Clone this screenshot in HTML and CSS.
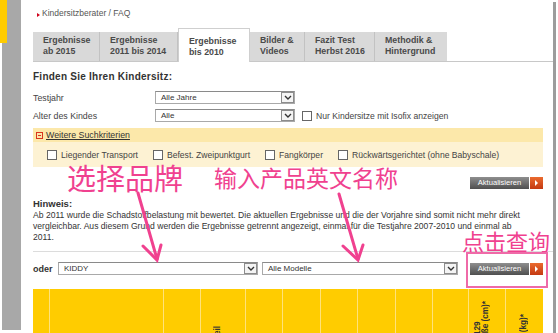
FILE: index.html
```html
<!DOCTYPE html>
<html lang="de">
<head>
    <meta charset="UTF-8">
    <title>Kindersitzberater / FAQ</title>
    <link rel="stylesheet" href="styles.css">
</head>
<body>
<div class="page">
    <div class="sidebar"><div class="sidebar-mark"></div></div>
    <div class="main">
        <div class="crumb"><span class="crumb-arrow"></span>Kindersitzberater / FAQ</div>
        <ul class="tabs">
            <li class="tab t1">Ergebnisse<br>ab 2015</li>
            <li class="tab t2">Ergebnisse<br>2011 bis 2014</li>
            <li class="tab t3 active">Ergebnisse<br>bis 2010</li>
            <li class="tab t4">Bilder &amp;<br>Videos</li>
            <li class="tab t5">Fazit Test<br>Herbst 2016</li>
            <li class="tab t6">Methodik &amp;<br>Hintergrund</li>
        </ul>

        <h2 class="finder-title">Finden Sie Ihren Kindersitz:</h2>

        <div class="form-row">
            <label class="form-label">Testjahr</label>
            <div class="select sel-short"><span>Alle Jahre</span><i class="sel-btn"><svg width="8" height="5" viewBox="0 0 8 5"><path d="M1 1 L4 4 L7 1" fill="none" stroke="#333" stroke-width="1.4"/></svg></i></div>
        </div>
        <div class="form-row second">
            <label class="form-label">Alter des Kindes</label>
            <div class="select sel-short"><span>Alle</span><i class="sel-btn"><svg width="8" height="5" viewBox="0 0 8 5"><path d="M1 1 L4 4 L7 1" fill="none" stroke="#333" stroke-width="1.4"/></svg></i></div>
            <span class="check"><i class="box"></i>Nur Kindersitze mit Isofix anzeigen</span>
        </div>

        <div class="more">
            <div class="more-head"><span class="minus"></span><a class="more-link">Weitere Suchkriterien</a></div>
            <div class="more-body">
                <span class="check"><i class="box"></i>Liegender Transport</span>
                <span class="check"><i class="box"></i>Befest. Zweipunktgurt</span>
                <span class="check"><i class="box"></i>Fangkörper</span>
                <span class="check"><i class="box"></i>Rückwärtsgerichtet (ohne Babyschale)</span>
            </div>
        </div>

        <div class="btn-row">
            <div class="btn"><span class="btn-label">Aktualisieren</span><span class="btn-go"></span></div>
        </div>

        <div class="hint">
            <b>Hinweis:</b>
            <p>Ab 2011 wurde die Schadstoffbelastung mit bewertet. Die aktuellen Ergebnisse und die der Vorjahre sind somit nicht mehr direkt vergleichbar. Aus diesem Grund werden die Ergebnisse getrennt angezeigt, einmal für die Testjahre 2007-2010 und einmal ab 2011.</p>
        </div>

        <div class="sep"></div>

        <div class="oder-row">
            <b class="oder">oder</b>
            <div class="select sel-brand"><span>KIDDY</span><i class="sel-btn"><svg width="8" height="5" viewBox="0 0 8 5"><path d="M1 1 L4 4 L7 1" fill="none" stroke="#333" stroke-width="1.4"/></svg></i></div>
            <div class="select sel-model"><span>Alle Modelle</span><i class="sel-btn"><svg width="8" height="5" viewBox="0 0 8 5"><path d="M1 1 L4 4 L7 1" fill="none" stroke="#333" stroke-width="1.4"/></svg></i></div>
            <div class="btn"><span class="btn-label">Aktualisieren</span><span class="btn-go"></span></div>
        </div>

        <div class="results">
            <div class="col c1"></div>
            <div class="col c2"></div>
            <div class="col c3"></div>
            <div class="col c4"><span class="vtext v-low">Gesamturteil</span></div>
            <div class="col c5"></div>
            <div class="col c6"></div>
            <div class="col c7"></div>
            <div class="col c8"></div>
            <div class="col c9"></div>
            <div class="col c10"></div>
            <div class="col c11"><span class="vtext v-mid">Größe 40-129<br>Körpergröße (cm)*</span></div>
            <div class="col c12"><span class="vtext v-deep">bis 44<br>Gewicht (kg)*</span></div>
        </div>
    </div>
    <div class="rightbar"></div>

    <!-- annotations drawn over the screenshot -->
    <div class="note n1">选择品牌</div>
    <div class="note n2">输入产品英文名称</div>
    <div class="note n3">点击查询</div>
    <div class="note-box"></div>
    <svg class="arrows" width="558" height="333" viewBox="0 0 558 333">
        <g fill="none" stroke="#f0418f" stroke-width="3" stroke-linecap="round">
            <path d="M138 193 L157 259"/>
            <path d="M143 246 L157 260 L161 245"/>
            <path d="M339 194 L358 259"/>
            <path d="M343 246 L358 260 L363 245"/>
        </g>
    </svg>
</div>
</body>
</html>
```

FILE: styles.css
```css
html,body{margin:0;padding:0;overflow:hidden;background:#fff;}
body{font-family:"Liberation Sans",Arial,sans-serif;font-size:8.5px;color:#333;}
ul,li,p,h2{margin:0;padding:0;}

.page{position:relative;display:flex;width:558px;height:333px;overflow:hidden;}

.sidebar{width:19px;height:330px;margin-left:2px;background:#a8a8a8;flex:none;}
.sidebar-mark{width:7px;height:43px;margin-left:-2px;background:#ffcc00;}

.main{width:510px;padding:0 10px 0 12px;flex:none;}
.rightbar{width:3px;margin-top:2px;background:#9c9c9c;flex:none;}

.crumb{height:28px;line-height:26px;font-size:8.5px;color:#555;padding-left:4px;}
.crumb-arrow{display:inline-block;width:0;height:0;border-left:3px solid #d0021b;border-top:2px solid transparent;border-bottom:2px solid transparent;margin-right:2px;vertical-align:-1px;}

.tabs{display:flex;align-items:flex-end;list-style:none;height:33px;margin-right:-10px;border-bottom:1px solid #c8c8c8;}
.tab{height:29px;box-sizing:border-box;padding:3px 4px 0 10px;background:#d9d9d9;border-right:1px solid #c2c2c2;font-weight:bold;font-size:8.8px;line-height:10.5px;color:#4a4a4a;}
.tab.active{height:34px;margin-bottom:-1px;padding-top:7px;background:#fff;border:1px solid #cfcfcf;border-bottom:none;}
.t1{width:67px;}
.t2{width:78px;}
.t3{width:72px;}
.t4{width:55px;}
.t5{width:70px;}
.t6{width:72px;border-right:none;}

.finder-title{margin-top:8px;font-size:10px;line-height:14px;letter-spacing:0.25px;color:#333;}

.form-row{display:flex;align-items:center;height:13px;margin-top:7px;}
.form-row.second{margin-top:5px;}
.form-label{width:122px;font-size:8.8px;color:#444;}

.select{display:flex;align-items:center;justify-content:space-between;box-sizing:border-box;height:13px;background:#fff;border:1px solid #a9a9a9;border-top-color:#8a8a8a;font-size:8px;color:#333;}
.select span{padding-left:5px;}
.sel-btn{display:flex;align-items:center;justify-content:center;box-sizing:border-box;width:13px;height:11px;border:1px solid #8c8c8c;background:#f4f4f4;}
.sel-short{width:140px;}
.sel-brand{width:200px;margin-left:5px;}
.sel-model{width:196px;margin-left:4px;}

.check{display:inline-flex;align-items:center;font-size:8.6px;color:#444;}
.box{display:inline-block;width:8px;height:8px;border:1px solid #666;background:#fff;margin-right:4px;}
.form-row .check{margin-left:7px;}

.more{margin-top:6px;}
.more-head{height:14px;display:flex;align-items:center;padding-left:3px;background:#fce8aa;}
.minus{position:relative;display:inline-block;box-sizing:border-box;width:7px;height:7px;border:1px solid #d9341f;margin-right:3px;}
.minus:after{content:"";position:absolute;left:1px;top:2px;width:3px;height:1px;background:#d9341f;}
.more-link{color:#333;text-decoration:underline;font-size:8.8px;}
.more-body{height:25px;display:flex;align-items:center;gap:15px;padding-left:14px;background:#fdf2d3;}

.btn-row{display:flex;justify-content:flex-end;margin-top:10px;}
.btn{display:flex;width:73px;height:12px;flex:none;}
.btn-label{flex:1;background:linear-gradient(#8e8e8e,#4f4f4f);color:#fff;font-size:7.6px;line-height:12px;text-align:center;}
.btn-go{position:relative;width:13px;margin-left:1px;background:linear-gradient(#ea6a2e,#c43a12);}
.btn-go:after{content:"";position:absolute;left:5px;top:3px;border-left:3px solid #fff;border-top:3px solid transparent;border-bottom:3px solid transparent;}

.hint{width:494px;margin-top:9px;line-height:11px;font-size:8.6px;color:#333;}
.hint b{font-size:9.5px;color:#333;}
.hint p{margin:0;}

.sep{height:1px;margin:8px -10px 0 0;background:#dcdcdc;}

.oder-row{display:flex;align-items:center;height:13px;margin-top:10px;}
.oder{width:20px;font-size:9px;color:#333;}
.oder-row .btn{margin-left:12px;}

.results{display:flex;height:120px;margin-top:14px;background:#ffcc00;}
.col{box-sizing:border-box;border-left:1px solid #ffe27a;height:100%;}
.c1{width:16px;border-left:none;}
.c2{width:114px;}
.c3{width:37px;}
.c4{width:45px;}
.c5{width:37px;}
.c6{width:38px;}
.c7{width:37px;}
.c8{width:38px;}
.c9{width:37px;}
.c10{width:36px;}
.c11{width:37px;}
.c12{width:38px;}
.vtext{display:block;writing-mode:vertical-rl;transform:rotate(180deg);font-weight:bold;font-size:8.2px;line-height:8px;color:#333;margin-left:5px;}
.v-low{margin-top:37px;margin-left:13px;}
.v-mid{margin-top:12px;}
.v-deep{margin-top:25px;margin-left:6px;}

.note{position:absolute;font-family:"Noto Sans CJK SC",sans-serif;color:#f0418f;line-height:1;white-space:nowrap;}
.n1{left:67px;top:163px;font-size:29px;}
.n2{left:214px;top:166px;font-size:23px;}
.n3{left:462px;top:229px;font-size:22px;}
.note-box{position:absolute;left:466px;top:252px;width:78px;height:32px;border:2.5px solid #ef6aa8;}
.arrows{position:absolute;left:0;top:0;pointer-events:none;}
```
